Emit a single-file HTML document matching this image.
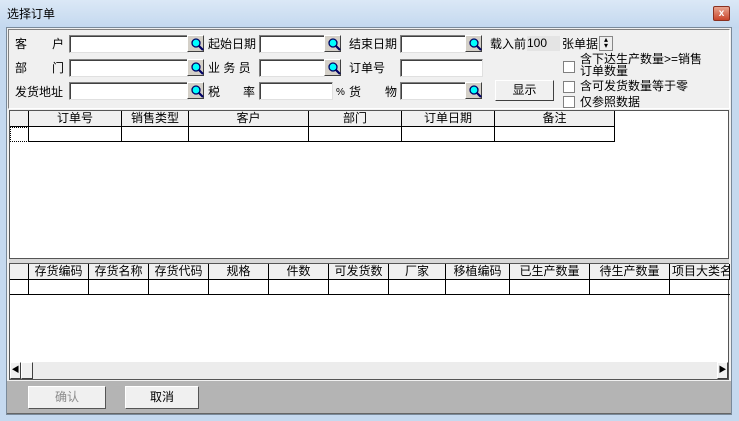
<!DOCTYPE html><html><head><meta charset="utf-8"><style>
*{margin:0;padding:0;box-sizing:border-box}
body{width:739px;height:421px;overflow:hidden;background:#c5d9ef;font-family:"Liberation Sans","Noto Sans CJK SC",sans-serif;font-size:12px;color:#000;position:relative}
.a{position:absolute}
.title{left:0;top:0;width:739px;height:28px;background:linear-gradient(#dbe8f6,#c3d8ef)}
.t{white-space:nowrap;line-height:14px}
.in{position:absolute;background:#fff;border:1px solid;border-color:#808080 #e0e0e0 #e0e0e0 #808080;box-shadow:inset 1px 1px 0 #404040}
.bt{position:absolute;background:#d4d0c8;border:1px solid;border-color:#fff #404040 #404040 #fff;width:17px;height:17px}
.bt svg{position:absolute;left:2px;top:1px}
.cb{position:absolute;width:12px;height:12px;background:#fff;border:1px solid #808080}
.grid{position:absolute;background:#fff;border:1px solid #555}
.hd{position:absolute;top:0;height:16px;background:#f0f0f0;border-right:1px solid #000;border-bottom:1px solid #000;text-align:center;line-height:15px;white-space:nowrap;overflow:hidden}
.cl{position:absolute;height:15px;border-right:1px solid #000;border-bottom:1px solid #000}
</style></head><body>
<div class="a title"></div>
<div class="a t" style="left:7px;top:7px;font-size:12px">选择订单</div>
<div class="a" style="left:713px;top:6px;width:17px;height:15px;background:linear-gradient(#e9a48f,#c9452b);border:1px solid #8a3020;border-radius:2px;color:#fff;font-size:10px;text-align:center;line-height:13px;font-weight:bold">x</div>
<div class="a" style="left:6px;top:27px;width:726px;height:388px;background:#f0f0f0;border:1px solid #7a8a9a"></div>
<div class="a" style="left:8px;top:29px;width:722px;height:80px;border:1px solid;border-color:#808080 #fff #fff #808080"></div>
<svg width="0" height="0" style="position:absolute"><defs><g id="mg"><circle cx="6" cy="6" r="4" fill="#0ff" stroke="#006" stroke-width="1.3"/><path d="M9 9l4 4" stroke="#006" stroke-width="2.2"/></g></defs></svg>

<div class="a t" style="left:15px;top:37px">客</div><div class="a t" style="left:52px;top:37px">户</div>
<div class="in" style="left:69px;top:35px;width:120px;height:18px"></div><div class="bt" style="left:187px;top:35px"><svg width="14" height="14"><use href="#mg"/></svg></div>
<div class="a t" style="left:208px;top:37px">起始日期</div>
<div class="in" style="left:259px;top:35px;width:66px;height:18px"></div><div class="bt" style="left:324px;top:35px"><svg width="14" height="14"><use href="#mg"/></svg></div>
<div class="a t" style="left:349px;top:37px">结束日期</div>
<div class="in" style="left:400px;top:35px;width:66px;height:18px"></div><div class="bt" style="left:465px;top:35px"><svg width="14" height="14"><use href="#mg"/></svg></div>
<div class="a t" style="left:490px;top:37px">载入前</div>
<div class="a t" style="left:527px;top:36px;width:33px;height:15px;background:#e4e4e4;line-height:15px">100</div>
<div class="a t" style="left:562px;top:37px">张单据</div>
<div class="a" style="left:599px;top:36px;width:14px;height:15px;border:1px solid #888;background:#eee;font-size:8px;line-height:6px;text-align:center">▴<br>▾</div>

<div class="a t" style="left:15px;top:61px">部</div><div class="a t" style="left:52px;top:61px">门</div>
<div class="in" style="left:69px;top:59px;width:120px;height:18px"></div><div class="bt" style="left:187px;top:59px"><svg width="14" height="14"><use href="#mg"/></svg></div>
<div class="a t" style="left:208px;top:61px">业 务 员</div>
<div class="in" style="left:259px;top:59px;width:66px;height:18px"></div><div class="bt" style="left:324px;top:59px"><svg width="14" height="14"><use href="#mg"/></svg></div>
<div class="a t" style="left:349px;top:61px">订单号</div>
<div class="in" style="left:400px;top:59px;width:83px;height:18px"></div>

<div class="a t" style="left:15px;top:85px">发货地址</div>
<div class="in" style="left:69px;top:82px;width:120px;height:18px"></div><div class="bt" style="left:187px;top:82px"><svg width="14" height="14"><use href="#mg"/></svg></div>
<div class="a t" style="left:208px;top:85px">税</div><div class="a t" style="left:243px;top:85px">率</div>
<div class="in" style="left:259px;top:82px;width:74px;height:18px"></div>
<div class="a t" style="left:336px;top:86px;font-size:10px">%</div>
<div class="a t" style="left:349px;top:85px">货</div><div class="a t" style="left:385px;top:85px">物</div>
<div class="in" style="left:400px;top:82px;width:66px;height:18px"></div><div class="bt" style="left:465px;top:82px"><svg width="14" height="14"><use href="#mg"/></svg></div>
<div class="a" style="left:495px;top:80px;width:59px;height:21px;background:#f0f0f0;border:1px solid;border-color:#fff #404040 #404040 #fff;text-align:center;line-height:19px">显示</div>

<div class="cb" style="left:563px;top:61px"></div><div class="cb" style="left:563px;top:81px"></div><div class="cb" style="left:563px;top:96px"></div>
<div class="a t" style="left:580px;top:53px;line-height:12px">含下达生产数量&gt;=销售<br>订单数量</div>
<div class="a t" style="left:580px;top:79px">含可发货数量等于零</div>
<div class="a t" style="left:580px;top:95px">仅参照数据</div>

<div class="grid" style="left:9px;top:110px;width:720px;height:149px">
<div class="hd" style="left:0;width:19px"></div>
<div class="hd" style="left:19px;width:93px">订单号</div>
<div class="hd" style="left:112px;width:67px">销售类型</div>
<div class="hd" style="left:179px;width:120px">客户</div>
<div class="hd" style="left:299px;width:93px">部门</div>
<div class="hd" style="left:392px;width:93px">订单日期</div>
<div class="hd" style="left:485px;width:120px">备注</div>
<div class="cl" style="left:0;top:16px;width:19px;border:1px dotted #000;border-right:1px solid #000"></div>
<div class="cl" style="left:19px;top:16px;width:93px"></div><div class="cl" style="left:112px;top:16px;width:67px"></div><div class="cl" style="left:179px;top:16px;width:120px"></div><div class="cl" style="left:299px;top:16px;width:93px"></div><div class="cl" style="left:392px;top:16px;width:93px"></div><div class="cl" style="left:485px;top:16px;width:120px"></div>
</div>
<div class="a" style="left:9px;top:259px;width:720px;height:4px;background:#d8d8d8"></div>
<div class="grid" style="left:9px;top:263px;width:720px;height:117px">
<div class="hd" style="left:0;width:19px"></div>
<div class="hd" style="left:19px;width:60px">存货编码</div>
<div class="hd" style="left:79px;width:60px">存货名称</div>
<div class="hd" style="left:139px;width:60px">存货代码</div>
<div class="hd" style="left:199px;width:60px">规格</div>
<div class="hd" style="left:259px;width:60px">件数</div>
<div class="hd" style="left:319px;width:60px">可发货数</div>
<div class="hd" style="left:379px;width:57px">厂家</div>
<div class="hd" style="left:436px;width:64px">移植编码</div>
<div class="hd" style="left:500px;width:80px">已生产数量</div>
<div class="hd" style="left:580px;width:80px">待生产数量</div>
<div class="hd" style="left:660px;width:60px;text-align:left;padding-left:2px">项目大类名称</div>
<div class="cl" style="left:0;top:16px;width:19px"></div>
<div class="cl" style="left:19px;top:16px;width:60px"></div><div class="cl" style="left:79px;top:16px;width:60px"></div><div class="cl" style="left:139px;top:16px;width:60px"></div><div class="cl" style="left:199px;top:16px;width:60px"></div><div class="cl" style="left:259px;top:16px;width:60px"></div><div class="cl" style="left:319px;top:16px;width:60px"></div><div class="cl" style="left:379px;top:16px;width:57px"></div><div class="cl" style="left:436px;top:16px;width:64px"></div><div class="cl" style="left:500px;top:16px;width:80px"></div><div class="cl" style="left:580px;top:16px;width:80px"></div><div class="cl" style="left:660px;top:16px;width:60px;border-right:0"></div>
<div class="a" style="left:0;top:98px;width:718px;height:17px;background:#ececec"></div>
<div class="a" style="left:0;top:98px;width:11px;height:17px;background:#f0f0f0;border:1px solid;border-color:#fff #404040 #404040 #fff;font-size:8px;line-height:14px;text-align:center">◀</div>
<div class="a" style="left:11px;top:98px;width:12px;height:17px;background:#f0f0f0;border:1px solid;border-color:#fff #404040 #404040 #fff"></div>
<div class="a" style="left:707px;top:98px;width:11px;height:17px;background:#f0f0f0;border:1px solid;border-color:#fff #404040 #404040 #fff;font-size:8px;line-height:14px;text-align:center">▶</div>
</div>
<div class="a" style="left:7px;top:381px;width:724px;height:33px;background:#b4b4b4;border-bottom:1px solid #666"></div>
<div class="a" style="left:28px;top:386px;width:78px;height:23px;background:#f0f0f0;border:1px solid;border-color:#fff #555 #555 #fff;text-align:center;line-height:21px;color:#8a8a8a">确认</div>
<div class="a" style="left:125px;top:386px;width:74px;height:23px;background:#f0f0f0;border:1px solid;border-color:#fff #555 #555 #fff;text-align:center;line-height:21px">取消</div>
</body></html>
